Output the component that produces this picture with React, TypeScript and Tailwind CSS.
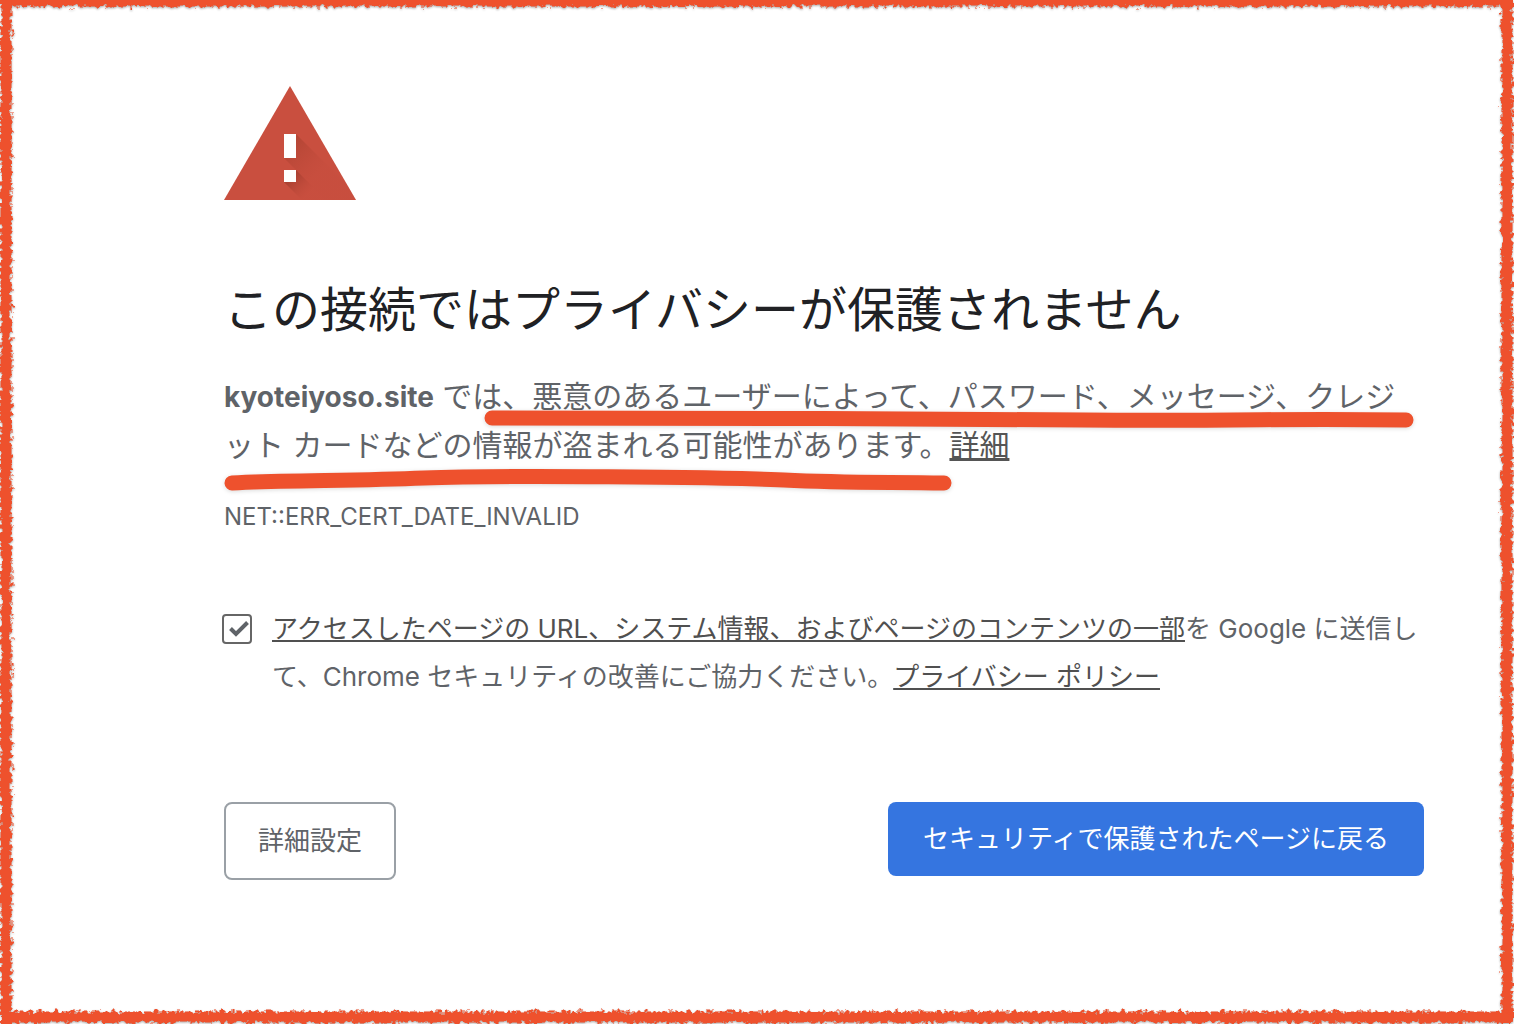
import { useState } from 'react'

function WarningIcon() {
  return (
    <svg viewBox="0 0 132 114" className="h-[114px] w-[132px]" aria-hidden="true">
      <defs>
        <linearGradient id="barShade" gradientUnits="userSpaceOnUse" x1="66" y1="60" x2="94" y2="88">
          <stop offset="0" stopColor="#a8402f" stopOpacity="0.6" />
          <stop offset="1" stopColor="#c0493a" stopOpacity="0.15" />
        </linearGradient>
        <linearGradient id="dotShade" gradientUnits="userSpaceOnUse" x1="66" y1="90" x2="84" y2="108">
          <stop offset="0" stopColor="#9c3a2b" stopOpacity="0.8" />
          <stop offset="1" stopColor="#c0493a" stopOpacity="0.1" />
        </linearGradient>
        <clipPath id="triangle">
          <path d="M66 0 132 114H0Z" />
        </clipPath>
      </defs>
      <g clipPath="url(#triangle)">
        <path d="M0 0H132V114H0Z" fill="#c94f3f" />
        <path d="M72 48 138 114H102L60 72Z" fill="url(#barShade)" />
        <path d="M72 84 102 114H78L60 96Z" fill="url(#dotShade)" />
      </g>
      <path d="M60 48h12v24H60zM60 84h12v12H60z" fill="#fff" />
    </svg>
  )
}

function CrayonFrame() {
  return (
    <svg className="pointer-events-none absolute inset-0 h-full w-full" aria-hidden="true">
      <defs>
        <filter id="crayon" filterUnits="userSpaceOnUse" x="0" y="0" width="100%" height="100%" colorInterpolationFilters="sRGB">
          <feTurbulence type="fractalNoise" baseFrequency="0.24" numOctaves="2" seed="4" result="noise" />
          <feDisplacementMap in="SourceGraphic" in2="noise" scale="9" xChannelSelector="R" yChannelSelector="G" result="rough" />
          <feGaussianBlur in="rough" stdDeviation="0.4" result="soft" />
          <feDropShadow in="soft" dx="0" dy="1" stdDeviation="1" floodColor="#000" floodOpacity="0.35" />
        </filter>
      </defs>
      <g filter="url(#crayon)" stroke="#ee512d" strokeWidth="11">
        <line x1="0" y1="1" x2="100%" y2="1" />
        <line x1="6" y1="0" x2="6" y2="100%" />
        <line x1="100%" y1="0" x2="100%" y2="100%" transform="translate(-7 0)" />
        <line x1="0" y1="100%" x2="100%" y2="100%" transform="translate(0 -7)" />
      </g>
    </svg>
  )
}

function MarkerLines() {
  return (
    <svg viewBox="0 0 1200 130" className="pointer-events-none absolute top-0 left-0 w-[1200px] drop-shadow-sm" aria-hidden="true">
      <g fill="none" stroke="#ee512d" strokeWidth="15" strokeLinecap="round">
        <path d="M268 46C420 45 680 47 860 48S1060 46 1182 48" />
        <path d="M8 111C60 108 130 109 200 106S500 105 560 108S660 110 720 111" />
      </g>
    </svg>
  )
}

export default function App() {
  const [report, setReport] = useState(true)

  return (
    <div className="relative min-h-screen bg-white font-['Inter','Noto_Sans_CJK_JP',sans-serif] text-[#5f6368]" lang="ja">
      <main className="pt-[86px] pr-[90px] pb-36 pl-56">
        <WarningIcon />
        <h1 className="mt-20 text-[48px] leading-[60px] text-[#202124]">この接続ではプライバシーが保護されません</h1>
        <div className="relative mt-8">
          <p className="text-[30px] leading-[48px]">
            <strong className="text-[28px]">kyoteiyoso.site</strong> では、悪意のあるユーザーによって、パスワード、メッセージ、クレジット カードなどの情報が盗まれる可能性があります。
            <a href="#details" className="text-[#555] underline">詳細</a>
          </p>
          <MarkerLines />
        </div>
        <p className="mt-6 text-[24px] leading-[48px]">NET::ERR_CERT_DATE_INVALID</p>
        <div className="mt-16 -ml-0.5 flex items-start gap-5">
          <span className="mt-[9px] grid shrink-0">
            <input
              id="report"
              type="checkbox"
              checked={report}
              onChange={(e) => setReport(e.target.checked)}
              className="col-start-1 row-start-1 size-[30px] appearance-none rounded border-2 border-[#666] bg-white"
            />
            {report && (
              <svg viewBox="0 0 30 30" className="pointer-events-none col-start-1 row-start-1 size-[30px]" aria-hidden="true">
                <path d="M8.5 14.5 14 20 25.5 8.5" fill="none" stroke="#5f6368" strokeWidth="4" />
              </svg>
            )}
          </span>
          <label htmlFor="report" className="text-[26px] leading-[48px]">
            <a href="#report" className="text-[#505050] underline">アクセスしたページの URL、システム情報、およびページのコンテンツの一部</a>を Google に送信して、Chrome セキュリティの改善にご協力ください。
            <a href="#privacy" className="text-[#505050] underline">プライバシー ポリシー</a>
          </label>
        </div>
        <div className="mt-[101px] flex items-start justify-between">
          <button className="rounded-lg border-2 border-[#9aa0a6] px-8 py-4 text-[26px] leading-[42px]">詳細設定</button>
          <button className="rounded-lg bg-[#3575e0] px-[35px] py-4 text-[26px] leading-[42px] text-white">セキュリティで保護されたページに戻る</button>
        </div>
      </main>
      <CrayonFrame />
    </div>
  )
}
